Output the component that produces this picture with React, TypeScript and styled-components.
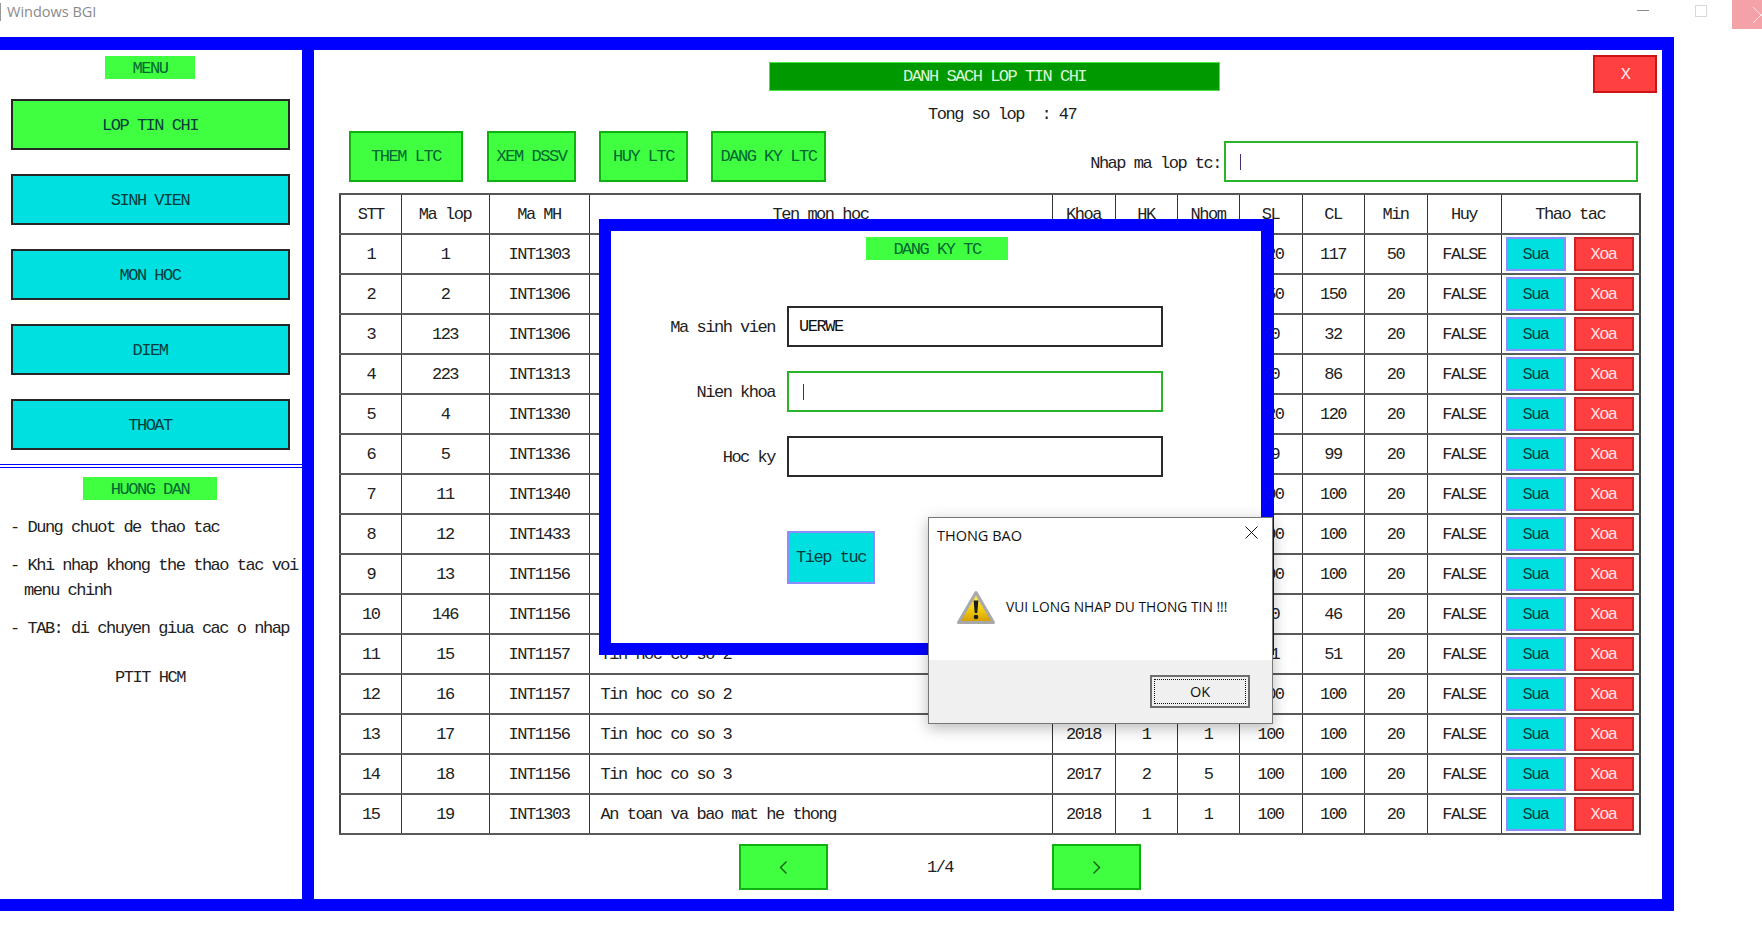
import React from 'react';
import styled, { createGlobalStyle } from 'styled-components';

const GlobalStyle = createGlobalStyle`
  html, body {
    margin: 0;
    padding: 0;
    width: 1762px;
    height: 927px;
    overflow: hidden;
    background: #fff;
  }
  * {
    box-sizing: border-box;
  }
`;

const GREEN = '#40ff40';
const CYAN = '#00e0e0';
const RED = '#ff4040';
const BLUE = '#0000ff';

const Page = styled.div`
  position: relative;
  width: 1762px;
  height: 927px;
  font-family: 'Liberation Mono', monospace;
  font-size: 17px;
  letter-spacing: -1.48px;
  color: #222;
  background: #fff;
`;

const TitleBar = styled.div`
  height: 37px;
  display: flex;
  align-items: flex-start;
  font-family: 'Open Sans', 'Noto Sans', sans-serif;
  letter-spacing: 0;
`;

const WindowName = styled.div`
  flex: 1;
  font-size: 14.5px;
  line-height: 18px;
  color: #8a8a8a;
  border-left: 1px solid #999;
  height: 18px;
  margin-top: 3px;
  padding: 0 0 0 6px;
`;

const MinimizeIcon = styled.div`
  width: 12px;
  height: 1px;
  margin: 10px 46px 0 0;
  background: #8c8c8c;
`;

const MaximizeIcon = styled.div`
  width: 12px;
  height: 12px;
  margin: 5px 25px 0 0;
  border: 1px solid #d8d8d8;
`;

const CloseBox = styled.div`
  width: 30px;
  height: 29px;
  background: #f4a2a8;
  display: flex;
  align-items: center;
  justify-content: flex-end;
`;

const Frame = styled.div`
  width: 1674px;
  height: 874px;
  display: flex;
  border-top: 13px solid ${BLUE};
  border-right: 12px solid ${BLUE};
  border-bottom: 12px solid ${BLUE};
`;

const Sidebar = styled.aside`
  width: 314px;
  flex: none;
  border-right: 12px solid ${BLUE};
  display: flex;
  flex-direction: column;
`;

const MenuSection = styled.div`
  height: 414px;
  padding: 6px 2px 0 0;
  display: flex;
  flex-direction: column;
  align-items: center;
`;

const Tag = styled.div<{ $w: number }>`
  width: ${p => p.$w}px;
  height: 23px;
  padding-top: 1px;
  background: ${GREEN};
  display: flex;
  align-items: center;
  justify-content: center;
  flex: none;
  color: #063;
`;

const MenuList = styled.div`
  margin-top: 20px;
  width: 279px;
  display: flex;
  flex-direction: column;
  gap: 24px;
`;

const MenuButton = styled.div<{ $active?: boolean }>`
  height: 51px;
  padding-top: 1px;
  background: ${p => (p.$active ? GREEN : CYAN)};
  border: 2px solid #262626;
  display: flex;
  align-items: center;
  justify-content: center;
  color: #043c3c;
`;

const DoubleRule = styled.div`
  height: 4px;
  flex: none;
  border-top: 1.5px solid ${BLUE};
  border-bottom: 1.5px solid ${BLUE};
`;

const HelpSection = styled.div`
  padding: 9px 2px 0 0;
  display: flex;
  flex-direction: column;
  align-items: center;
`;

const HelpList = styled.div`
  align-self: flex-start;
  margin-top: 15px;
  padding-left: 10px;
  white-space: pre;
  line-height: 25px;
`;

const HelpItem = styled.div`
  margin-bottom: 13px;
`;

const HelpContinued = styled.div`
  margin-left: 14px;
`;

const Credit = styled.div`
  margin-top: 14px;
`;

const Content = styled.main`
  flex: 1;
  min-width: 0;
  padding: 0 22px 0 26px;
  display: flex;
  flex-direction: column;
`;

const TopRow = styled.div`
  display: flex;
  align-items: flex-start;
  padding-top: 5px;
  height: 43px;
`;

const PageTitle = styled.div`
  width: 451px;
  height: 29px;
  margin: 7px 0 0 429px;
  background: #009a00;
  border: 1px solid #48e848;
  display: flex;
  align-items: center;
  justify-content: center;
  color: #dcf8dc;
`;

const ExitButton = styled.div`
  width: 64px;
  height: 38px;
  margin-left: auto;
  margin-right: -17px;
  background: ${RED};
  border: 2px solid #cc1414;
  display: flex;
  align-items: center;
  justify-content: center;
  color: #ffe8e8;
`;

const Summary = styled.div`
  margin: 12px 0 0 588px;
  line-height: 20px;
  height: 19px;
  white-space: pre;
`;

const ActionRow = styled.div`
  margin-top: 7px;
  height: 51px;
  padding-left: 9px;
  display: flex;
  align-items: flex-end;
`;

const ActionButton = styled.div<{ $w: number }>`
  width: ${p => p.$w}px;
  height: 51px;
  margin-right: 23px;
  background: ${GREEN};
  border: 2px solid #10b010;
  display: flex;
  align-items: center;
  justify-content: center;
  color: #063;

  &:first-child {
    margin-right: 24px;
  }
`;

const SearchLabel = styled.div`
  margin-left: auto;
  height: 41px;
  margin-right: 3px;
  padding-top: 3px;
  display: flex;
  align-items: center;
  white-space: nowrap;
`;

const Field = styled.div<{ $w: number; $focus?: boolean }>`
  width: ${p => p.$w}px;
  height: 41px;
  flex: none;
  margin-right: 2px;
  border: 2px solid ${p => (p.$focus ? '#2ab42a' : '#2a2a2a')};
  background: #fff;
  display: flex;
  align-items: center;
  padding-left: 10px;
  color: #111;
`;

const Caret = styled.span`
  width: 1px;
  height: 16px;
  margin-left: 4px;
  background: #4a2a6a;
`;

const ListTable = styled.table`
  margin: 11px 0 0 -1px;
  width: 1300px;
  table-layout: fixed;
  border-collapse: collapse;
  flex: none;
  border-top: 2px solid #555;
  border-left: 2px solid #444;
  border-right: 2px solid #444;
`;

const HeadCell = styled.th`
  height: 40px;
  padding: 0;
  font-weight: normal;
  text-align: center;
  border-left: 1px solid #333;
  border-bottom: 2px solid #5a5a5a;
`;

const Cell = styled.td<{ $left?: boolean }>`
  height: 40px;
  padding: ${p => (p.$left ? '0 0 0 11px' : '0')};
  text-align: ${p => (p.$left ? 'left' : 'center')};
  border-left: 1px solid #333;
  border-bottom: 2px solid #5a5a5a;
  white-space: nowrap;
`;

const RowActions = styled.div`
  display: flex;
  gap: 8px;
  padding-left: 4px;
`;

const RowButton = styled.div<{ $danger?: boolean }>`
  width: 60px;
  height: 34px;
  background: ${p => (p.$danger ? RED : CYAN)};
  border: 2px solid ${p => (p.$danger ? '#d02424' : '#8c8cff')};
  color: ${p => (p.$danger ? '#ffe4e4' : '#064040')};
  display: flex;
  align-items: center;
  justify-content: center;
`;

const Pager = styled.div`
  margin: 9px 0 0 399px;
  display: flex;
  align-items: center;
`;

const PagerButton = styled.div`
  width: 89px;
  height: 46px;
  background: ${GREEN};
  border: 2px solid #10b010;
  display: flex;
  align-items: center;
  justify-content: center;
`;

const PagerLabel = styled.div`
  width: 224px;
  text-align: center;
`;

const FormModal = styled.section`
  position: absolute;
  left: 599px;
  top: 219px;
  width: 675px;
  height: 436px;
  background: #fff;
  border: 12px solid ${BLUE};
  border-right-width: 13px;
  display: flex;
  flex-direction: column;
  align-items: flex-start;
`;

const FormTag = styled(Tag)`
  margin: 6px 0 0 255px;
`;

const FormRows = styled.div`
  margin-top: 46px;
  display: flex;
  flex-direction: column;
  gap: 24px;
`;

const FormRow = styled.div`
  display: flex;
  align-items: center;
  gap: 12px;
`;

const FormLabel = styled.div`
  width: 164px;
  padding-top: 2px;
  text-align: right;
`;

const ContinueButton = styled.div`
  width: 88px;
  height: 53px;
  margin: 54px 0 0 176px;
  background: ${CYAN};
  border: 2px solid #8c8cff;
  display: flex;
  align-items: center;
  justify-content: center;
  color: #043c3c;
`;

const Dialog = styled.section`
  position: absolute;
  left: 928px;
  top: 517px;
  width: 345px;
  height: 207px;
  background: #fff;
  border: 1px solid #777;
  box-shadow: 0 4px 14px rgba(0, 0, 0, 0.28);
  font-family: 'Open Sans', 'Noto Sans', sans-serif;
  letter-spacing: 0;
  color: #111;
  display: flex;
  flex-direction: column;
`;

const DialogHead = styled.div`
  height: 36px;
  padding: 8px 14px 0 8px;
  display: flex;
  justify-content: space-between;
  align-items: flex-start;
  font-size: 14.5px;
  line-height: 19px;
`;

const DialogBody = styled.div`
  flex: 1;
  display: flex;
  align-items: flex-start;
  padding: 36px 0 0 27px;
  gap: 10px;
  font-size: 13.8px;
  line-height: 18px;
`;

const DialogMessage = styled.div`
  margin-top: 8px;
  white-space: nowrap;
`;

const DialogFoot = styled.div`
  height: 63px;
  background: #f0f0f0;
  display: flex;
  justify-content: flex-end;
  padding: 15px 22px 0 0;
`;

const OkButton = styled.div`
  width: 100px;
  height: 33px;
  border: 2px solid #6e6e6e;
  background: #f0f0f0;
  padding: 2px;
  font-size: 14.5px;
`;

const OkInner = styled.div`
  height: 100%;
  border: 1px dotted #111;
  display: flex;
  align-items: center;
  justify-content: center;
`;

const WarningIcon = () => (
  <svg width="40" height="36" viewBox="0 0 40 36">
    <defs>
      <linearGradient id="warnFill" x1="0" y1="0" x2="0" y2="1">
        <stop offset="0" stopColor="#fff27a" />
        <stop offset="0.55" stopColor="#f2cf10" />
        <stop offset="1" stopColor="#d69a00" />
      </linearGradient>
    </defs>
    <path
      d="M20 2.5 L37.5 32.5 H2.5 Z"
      fill="url(#warnFill)"
      stroke="#a8a8a8"
      strokeWidth="3"
      strokeLinejoin="round"
    />
    <path d="M17.6 10.5 H22.4 L21.3 23 H18.7 Z" fill="#1c1c1c" />
    <circle cx="20" cy="27" r="2.3" fill="#1c1c1c" />
  </svg>
);

const CloseGlyph = () => (
  <svg width="13" height="13" viewBox="0 0 13 13">
    <path d="M0.5 0.5 L12.5 12.5 M12.5 0.5 L0.5 12.5" stroke="#111" strokeWidth="1" fill="none" />
  </svg>
);

const Chevron = ({ flip }: { flip?: boolean }) => (
  <svg width="9" height="13" viewBox="0 0 9 13">
    <path
      d={flip ? 'M1.5 0.5 L7.5 6.5 L1.5 12.5' : 'M7.5 0.5 L1.5 6.5 L7.5 12.5'}
      stroke="#145c14"
      strokeWidth="1.4"
      fill="none"
    />
  </svg>
);

const columns = [
  { label: 'STT', width: 61 },
  { label: 'Ma lop', width: 88 },
  { label: 'Ma MH', width: 100 },
  { label: 'Ten mon hoc', width: 463 },
  { label: 'Khoa', width: 63 },
  { label: 'HK', width: 62 },
  { label: 'Nhom', width: 62 },
  { label: 'SL', width: 63 },
  { label: 'CL', width: 62 },
  { label: 'Min', width: 63 },
  { label: 'Huy', width: 74 },
  { label: 'Thao tac', width: 139 },
];

type Row = [number, number, string, string, string, string, string, string, number, number];

const rows: Row[] = [
  [1, 1, 'INT1303', '', '', '', '', '120', 117, 50],
  [2, 2, 'INT1306', '', '', '', '', '150', 150, 20],
  [3, 123, 'INT1306', '', '', '', '', '50', 32, 20],
  [4, 223, 'INT1313', '', '', '', '', '90', 86, 20],
  [5, 4, 'INT1330', '', '', '', '', '120', 120, 20],
  [6, 5, 'INT1336', '', '', '', '', '99', 99, 20],
  [7, 11, 'INT1340', '', '', '', '', '100', 100, 20],
  [8, 12, 'INT1433', '', '', '', '', '100', 100, 20],
  [9, 13, 'INT1156', '', '', '', '', '100', 100, 20],
  [10, 146, 'INT1156', '', '', '', '', '50', 46, 20],
  [11, 15, 'INT1157', 'Tin hoc co so 2', '', '', '', '51', 51, 20],
  [12, 16, 'INT1157', 'Tin hoc co so 2', '', '', '', '100', 100, 20],
  [13, 17, 'INT1156', 'Tin hoc co so 3', '2018', '1', '1', '100', 100, 20],
  [14, 18, 'INT1156', 'Tin hoc co so 3', '2017', '2', '5', '100', 100, 20],
  [15, 19, 'INT1303', 'An toan va bao mat he thong', '2018', '1', '1', '100', 100, 20],
];

const menuItems = ['LOP TIN CHI', 'SINH VIEN', 'MON HOC', 'DIEM', 'THOAT'];
const actions = [
  { label: 'THEM LTC', width: 114 },
  { label: 'XEM DSSV', width: 89 },
  { label: 'HUY LTC', width: 89 },
  { label: 'DANG KY LTC', width: 115 },
];

const App = (): JSX.Element => (
  <Page>
    <GlobalStyle />
    <TitleBar>
      <WindowName>Windows BGI</WindowName>
      <MinimizeIcon />
      <MaximizeIcon />
      <CloseBox>
        <svg width="10" height="20" viewBox="0 0 10 20">
          <path d="M1 2 L10 11 M1 18 L10 9" stroke="#fbe3e5" strokeWidth="1" fill="none" />
        </svg>
      </CloseBox>
    </TitleBar>

    <Frame>
      <Sidebar>
        <MenuSection>
          <Tag $w={90}>MENU</Tag>
          <MenuList>
            {menuItems.map((item, i) => (
              <MenuButton key={item} $active={i === 0}>{item}</MenuButton>
            ))}
          </MenuList>
        </MenuSection>
        <DoubleRule />
        <HelpSection>
          <Tag $w={134}>HUONG DAN</Tag>
          <HelpList>
            <HelpItem>- Dung chuot de thao tac</HelpItem>
            <HelpItem>
              - Khi nhap khong the thao tac voi
              <HelpContinued>menu chinh</HelpContinued>
            </HelpItem>
            <HelpItem>- TAB: di chuyen giua cac o nhap</HelpItem>
          </HelpList>
          <Credit>PTIT HCM</Credit>
        </HelpSection>
      </Sidebar>

      <Content>
        <TopRow>
          <PageTitle>DANH SACH LOP TIN CHI</PageTitle>
          <ExitButton>X</ExitButton>
        </TopRow>
        <Summary>Tong so lop  : 47</Summary>
        <ActionRow>
          {actions.map(a => (
            <ActionButton key={a.label} $w={a.width}>{a.label}</ActionButton>
          ))}
          <SearchLabel>Nhap ma lop tc:</SearchLabel>
          <Field $w={414} $focus><Caret /></Field>
        </ActionRow>

        <ListTable>
          <colgroup>
            {columns.map(c => <col key={c.label} width={c.width} />)}
          </colgroup>
          <thead>
            <tr>
              {columns.map(c => <HeadCell key={c.label}>{c.label}</HeadCell>)}
            </tr>
          </thead>
          <tbody>
            {rows.map(r => (
              <tr key={r[0]}>
                <Cell>{r[0]}</Cell>
                <Cell>{r[1]}</Cell>
                <Cell>{r[2]}</Cell>
                <Cell $left>{r[3]}</Cell>
                <Cell>{r[4]}</Cell>
                <Cell>{r[5]}</Cell>
                <Cell>{r[6]}</Cell>
                <Cell>{r[7]}</Cell>
                <Cell>{r[8]}</Cell>
                <Cell>{r[9]}</Cell>
                <Cell>FALSE</Cell>
                <Cell>
                  <RowActions>
                    <RowButton>Sua</RowButton>
                    <RowButton $danger>Xoa</RowButton>
                  </RowActions>
                </Cell>
              </tr>
            ))}
          </tbody>
        </ListTable>

        <Pager>
          <PagerButton><Chevron /></PagerButton>
          <PagerLabel>1/4</PagerLabel>
          <PagerButton><Chevron flip /></PagerButton>
        </Pager>
      </Content>
    </Frame>

    <FormModal>
      <FormTag $w={142}>DANG KY TC</FormTag>
      <FormRows>
        <FormRow>
          <FormLabel>Ma sinh vien</FormLabel>
          <Field $w={376}>UERWE</Field>
        </FormRow>
        <FormRow>
          <FormLabel>Nien khoa</FormLabel>
          <Field $w={376} $focus><Caret /></Field>
        </FormRow>
        <FormRow>
          <FormLabel>Hoc ky</FormLabel>
          <Field $w={376} />
        </FormRow>
      </FormRows>
      <ContinueButton>Tiep tuc</ContinueButton>
    </FormModal>

    <Dialog>
      <DialogHead>
        <span>THONG BAO</span>
        <CloseGlyph />
      </DialogHead>
      <DialogBody>
        <WarningIcon />
        <DialogMessage>VUI LONG NHAP DU THONG TIN !!!</DialogMessage>
      </DialogBody>
      <DialogFoot>
        <OkButton><OkInner>OK</OkInner></OkButton>
      </DialogFoot>
    </Dialog>
  </Page>
);

export default App;
